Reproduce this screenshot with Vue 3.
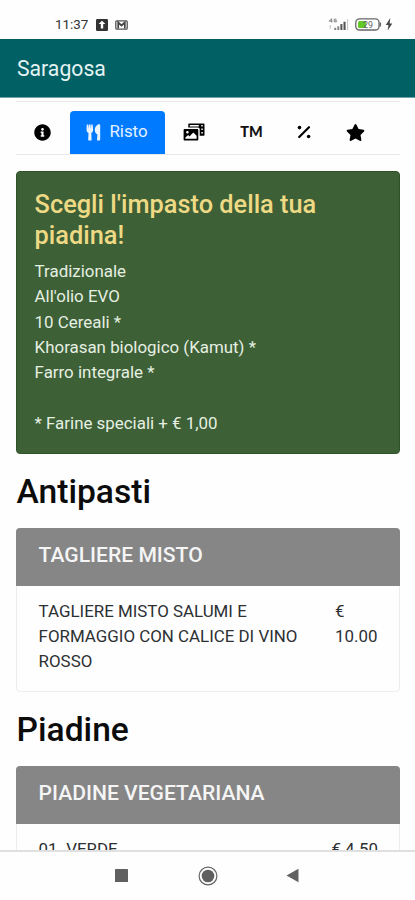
<script setup>
const doughs = [
  'Tradizionale',
  "All'olio EVO",
  '10 Cereali *',
  'Khorasan biologico (Kamut) *',
  'Farro integrale *',
]
const sections = [
  {
    title: 'Antipasti',
    group: 'TAGLIERE MISTO',
    items: [{ name: 'TAGLIERE MISTO SALUMI E FORMAGGIO CON CALICE DI VINO ROSSO', price: '€ 10.00', wrap: true }],
  },
  {
    title: 'Piadine',
    group: 'PIADINE VEGETARIANA',
    items: [{ name: '01. VERDE', price: '€ 4.50', wrap: false }],
  },
]
</script>

<template>
  <div class="screen">
    <div class="status">
      <div class="status-left">
        <span class="clock">11:37</span>
        <svg class="upload" viewBox="0 0 12 12"><rect width="12" height="12" rx="1.2" fill="#333" /><path d="M6 1.800 9.400 5H7.200v4.500H4.800V5H2.600z" fill="#fff" /></svg>
        <svg class="mail" viewBox="0 0 13 10"><rect x=".8" y=".8" width="11.4" height="8.4" rx="1" fill="#fff" stroke="#555" stroke-width="1.3" /><path d="M3.200 8.500V2.500l3.300 3 3.300-3v6" fill="none" stroke="#444" stroke-width="1.700" /></svg>
      </div>
      <div class="status-right">
        <svg class="signal" viewBox="0 0 22 13">
          <g fill="none" stroke="#777" stroke-width=".9"><path d="M3.6 4.3V.7L1.2 3.2h3.2M8.5 1.2H6.2v2.6h2.2V2.6H7.3" /><path d="M2.3 7.5v3.6M1.3 8.5l1-1" stroke="#bbb" /></g>
          <path d="M6.2 9.8h2V12h-2zM9.3 8.2h2V12h-2z" fill="#888" /><path d="M12.4 6h2v6h-2zM15.5 3.7h2.1V12h-2.1z" fill="#555" /><path d="M19 1.2h1.2V12H19z" fill="#ccc" />
        </svg>
        <svg class="battery" viewBox="0 0 27 13">
          <rect x=".8" y=".8" width="23.2" height="11.2" rx="3.6" fill="#fff" stroke="#666" stroke-width="1.3" />
          <rect x="3" y="3" width="8" height="7" rx="1.6" fill="#62c926" /><path d="M25.3 4.5v4" stroke="#666" stroke-width="1.5" />
          <text x="8" y="9.6" font-size="9" font-family="Roboto, sans-serif" fill="#666">29</text>
        </svg>
        <svg class="bolt" viewBox="0 0 8 13"><path d="M5.3 0 .8 7h2.7l-.9 5.6L7.3 5.4H4.6z" fill="#444" /></svg>
      </div>
    </div>

    <header class="appbar">Saragosa</header>

    <main class="content">
      <nav class="tabs">
        <div class="tab tab-info">
          <svg viewBox="0 0 512 512"><path d="M256 8C119.043 8 8 119.083 8 256c0 136.997 111.043 248 248 248s248-111.003 248-248C504 119.083 392.957 8 256 8zm0 110c23.196 0 42 18.804 42 42s-18.804 42-42 42-42-18.804-42-42 18.804-42 42-42zm56 254c0 6.627-5.373 12-12 12h-88c-6.627 0-12-5.373-12-12v-24c0-6.627 5.373-12 12-12h12v-64h-12c-6.627 0-12-5.373-12-12v-24c0-6.627 5.373-12 12-12h64c6.627 0 12 5.373 12 12v100h12c6.627 0 12 5.373 12 12v24z" /></svg>
        </div>
        <div class="tab tab-active">
          <svg viewBox="0 0 15 17"><path d="M.8.5h1.5l.3 4.2L3 .5h1.5l.3 4.2L5.3.5h1.3l.5 5.1c.1 1.8-.7 2.9-1.8 3.4l.3 6.7c0 .6-.3.9-.8.9H3c-.5 0-.8-.3-.8-.9L2.5 9C1.300 8.500.5 7.400.5 5.600zM13.300.3c.6 0 .9.3.9.8v14.700c0 .5-.3.8-.8.8h-1.600c-.5 0-.8-.3-.8-.9l.4-5.200C9.900 9.700 8.800 8.200 8.800 6.100 8.800 3 11.100.3 13.300.3z" /></svg>
          <span>Risto</span>
        </div>
        <div class="tab tab-photo">
          <svg viewBox="0 0 22 18">
            <path fill-rule="evenodd" d="M6.300.5h14.200c.7 0 1 .4 1 1v10.200c0 .7-.4 1-1 1h-3.800V6.500c0-1.200-.7-1.900-1.900-1.900H5.300V1.500c0-.6.3-1 1-1zM6.800 2v1.500h9V2zM18.300 2v1.500h1.500V2zm0 3.500V7h1.500V5.500zm0 3.500v1.500h1.500V9z" />
            <path fill-rule="evenodd" d="M1.700 6h12.500c.7 0 1.100.4 1.100 1.100v9.300c0 .7-.4 1.100-1.100 1.100H1.700c-.7 0-1.100-.4-1.100-1.100V7.100C.6 6.400 1 6 1.700 6zm.7 9.700h11.200v-2.900l-3.300-3.300-3.800 3.900-1.300-1.300-2.800 2.500zM4.400 7.900a1.300 1.300 0 1 0 0 2.600 1.300 1.300 0 0 0 0-2.600z" />
          </svg>
        </div>
        <div class="tab tab-tm">TM</div>
        <div class="tab tab-percent">
          <svg viewBox="0 0 14 14"><path d="M2.200 12 12 2.200" stroke="#000" stroke-width="2.200" stroke-linecap="round" /><circle cx="2.500" cy="2.600" r="1.800" /><circle cx="11.600" cy="11.500" r="1.800" /></svg>
        </div>
        <div class="tab tab-star">
          <svg viewBox="0 0 576 512"><path d="M259.300 17.800L194 150.200 47.900 171.500c-26.200 3.800-36.700 36.100-17.700 54.600l105.700 103-25 145.500c-4.500 26.300 23.200 46 46.400 33.700L288 439.600l130.700 68.700c23.200 12.200 50.900-7.400 46.400-33.700l-25-145.500 105.700-103c19-18.500 8.500-50.800-17.700-54.600L382 150.200 316.700 17.800c-11.700-23.600-45.600-23.900-57.400 0z" /></svg>
        </div>
      </nav>

      <section class="notice">
        <h4>Scegli l'impasto della tua piadina!</h4>
        <p v-for="d in doughs" :key="d">{{ d }}</p>
        <p class="extra">* Farine speciali + € 1,00</p>
      </section>

      <section v-for="s in sections" :key="s.title" class="section">
        <h2>{{ s.title }}</h2>
        <div class="card">
          <div class="card-head">{{ s.group }}</div>
          <div v-for="i in s.items" :key="i.name" class="row">
            <span class="name">{{ i.name }}</span>
            <span class="price" :class="{ narrow: i.wrap }">{{ i.price }}</span>
          </div>
        </div>
      </section>
    </main>

    <footer class="navbar">
      <svg class="recent" viewBox="0 0 13 13"><rect width="13" height="13" rx=".6" fill="#606060" /></svg>
      <svg class="home" viewBox="0 0 20 20"><circle cx="10" cy="10" r="8.900" fill="none" stroke="#666" stroke-width="1.200" /><circle cx="10" cy="10" r="6.300" fill="#606060" /></svg>
      <svg class="back" viewBox="0 0 13 15"><path d="M12.500.8v13.400L.5 7.500z" fill="#606060" /></svg>
    </footer>
  </div>
</template>

<style>
body {
  margin: 0;
  background: #fff;
}
</style>

<style scoped>
.screen {
  width: 415px;
  height: 900px;
  display: flex;
  flex-direction: column;
  overflow: hidden;
  background: #fefefe;
  font-family: Roboto, sans-serif;
  font-size: 16.9px;
  line-height: 25.4px;
  color: #2d3033;
}
svg {
  display: block;
  flex: none;
}
.status {
  flex: none;
  height: 39px;
  box-sizing: border-box;
  padding: 10px 22px 0 55px;
  display: flex;
  justify-content: space-between;
  align-items: center;
}
.status-left,
.status-right {
  display: flex;
  align-items: center;
}
.clock {
  font-size: 13.4px;
  color: #333;
  width: 41px;
  line-height: 16px;
}
.upload {
  width: 12px;
  height: 12px;
  margin-right: 7px;
}
.mail {
  width: 13px;
  height: 10px;
}
.signal {
  width: 22px;
  height: 13px;
  margin-right: 5px;
}
.battery {
  width: 27px;
  height: 13px;
  margin-right: 3px;
}
.bolt {
  width: 8px;
  height: 13px;
}
.appbar {
  flex: none;
  height: 59px;
  box-sizing: border-box;
  padding-left: 17px;
  background: #006064;
  border-bottom: 1px solid #6fa5a8;
  color: #e4f3f3;
  font-size: 21.2px;
  line-height: 59px;
}
.content {
  flex: 1;
  min-height: 0;
  overflow: hidden;
  padding: 3px 15px 0 16px;
}
.tabs {
  height: 54px;
  box-sizing: border-box;
  border-top: 1px solid #e9e9e7;
  border-bottom: 1px solid #e6e8ea;
  display: flex;
  align-items: flex-end;
  margin-bottom: 16px;
}
.tab {
  height: 43px;
  box-sizing: border-box;
  padding-bottom: 1px;
  display: flex;
  align-items: center;
  justify-content: center;
}
.tab-info {
  width: 54px;
  padding-right: 1px;
}
.tab-info svg {
  width: 17px;
  height: 17px;
}
.tab-active {
  width: 95px;
  padding-right: 1px;
  gap: 8px;
  background: #007bff;
  border-radius: 4px 4px 0 0;
  color: #e4f1ff;
}
.tab-active svg {
  width: 15px;
  height: 17px;
  fill: #e9f4ff;
}
.tab-photo {
  width: 58px;
}
.tab-photo svg {
  width: 22px;
  height: 18px;
}
.tab-tm {
  width: 57px;
  font-family: Lato, sans-serif;
  font-weight: 900;
  font-size: 14.4px;
  color: #111;
}
.tab-percent {
  width: 48px;
}
.tab-percent svg {
  width: 14px;
  height: 14px;
}
.tab-star {
  width: 55px;
}
.tab-star svg {
  width: 19px;
  height: 17px;
}
.notice {
  height: 283px;
  box-sizing: border-box;
  border: 1px solid #2e522a;
  border-radius: 4px;
  background: #3d6036;
  padding: 17.4px 17.6px;
  color: #e5efe2;
}
.notice h4 {
  margin: 0 0 8.4px;
  font-size: 25.35px;
  line-height: 30.5px;
  font-weight: 500;
  color: #eed985;
}
.notice p {
  margin: 0;
}
.notice .extra {
  margin-top: 25.4px;
}
.section h2 {
  box-sizing: border-box;
  margin: 0;
  padding: 17px 0 0 0.6px;
  height: 74px;
  font-size: 33.6px;
  line-height: 41px;
  font-weight: 500;
  color: #0c0c0c;
}
.card {
  box-sizing: border-box;
  border: 1px solid #ececec;
  border-radius: 4px;
  height: 164px;
}
.card-head {
  margin: -1px -1px 0;
  height: 57.5px;
  box-sizing: border-box;
  padding: 14px 22.6px;
  background: #868686;
  border-radius: 4px 4px 0 0;
  color: #f5f5f5;
  font-size: 21.1px;
  line-height: 25.4px;
  font-weight: 500;
}
.row {
  display: flex;
  justify-content: space-between;
  padding: 13px 21px 0 21.6px;
}
.name {
  width: 265px;
}
.price {
  white-space: nowrap;
}
.price.narrow {
  width: 43px;
  white-space: normal;
}
.navbar {
  flex: none;
  height: 50px;
  box-sizing: border-box;
  border-top: 2px solid #e0e0e0;
  background: #fefefe;
  display: flex;
  align-items: center;
  padding: 0 0 1px 115px;
}
.recent {
  width: 13px;
  height: 13px;
  margin-right: 70px;
}
.home {
  width: 20px;
  height: 20px;
  margin-right: 68px;
}
.back {
  width: 13px;
  height: 15px;
}
</style>
